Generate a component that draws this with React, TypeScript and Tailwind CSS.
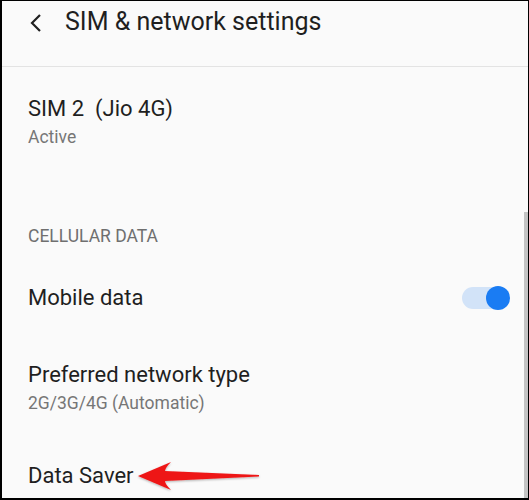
import React from "react";

const Item = (props: { title: string; sub?: string; className?: string }) => {
    return (
        <div className={props.className}>
            <p className="text-[22px] leading-[28px] text-[#1f1f1f]">{props.title}</p>
            {props.sub && <p className="mt-[3px] text-[17.5px] leading-[22px] text-[#767676]">{props.sub}</p>}
        </div>
    );
};

const Toggle = () => (
    <div className="relative w-[48px] h-[24px] flex items-center">
        <div className="w-[44px] h-[22px] rounded-full bg-[#d2e3f8]" />
        <div className="absolute right-0 top-0 size-[24px] rounded-full bg-[#1a7cf3]" />
    </div>
);

// red callout arrow pointing at "Data Saver"
const Arrow = () => (
    <svg width="126" height="36" viewBox="0 0 126 36" className="ml-[2px]">
        <defs>
            <filter id="sh" x="-10%" y="-30%" width="120%" height="160%">
                <feDropShadow dx="0" dy="1" stdDeviation="1.2" floodColor="#000" floodOpacity="0.3" />
            </filter>
        </defs>
        <path d="M2 18 L35 4 Q29 10 29 13 L123 17 L123 18.5 L29 23 Q29 26 35 32 Z" fill="#ee1818" filter="url(#sh)" />
    </svg>
);

export default function App() {
    return (
        <div className="w-[529px] h-[500px] bg-black p-[1px] pl-[2px] pb-[2px] pr-[1px] font-['Roboto',sans-serif]">
            <div className="relative w-full h-full bg-[#fafafa] overflow-hidden">
                <header className="h-[66px] border-b border-[#e3e3e3] flex items-start pt-[6px] pl-[26px]">
                    <svg width="18" height="30" viewBox="0 0 18 30" className="mt-[1px] text-[#202020]">
                        <path d="M12 7 L4 15 L12 23" fill="none" stroke="currentColor" strokeWidth="2.2" />
                    </svg>
                    <h1 className="ml-[19px] text-[25px] leading-[30px] text-[#1f1f1f]">SIM &amp; network settings</h1>
                </header>

                <div className="pl-[26px] pr-[18px]">
                    <Item className="mt-[28px]" title={"SIM 2\u00a0\u00a0(Jio 4G)"} sub="Active" />

                    <p className="mt-[77px] text-[17.5px] leading-[22px] text-[#6f6f6f]">CELLULAR DATA</p>

                    <div className="mt-[37px] flex items-center justify-between">
                        <p className="text-[22px] leading-[28px] text-[#1f1f1f]">Mobile data</p>
                        <Toggle />
                    </div>

                    <Item className="mt-[49px]" title="Preferred network type" sub="2G/3G/4G (Automatic)" />

                    <div className="mt-[44px] flex items-center">
                        <p className="text-[22px] leading-[28px] text-[#1f1f1f]">Data Saver</p>
                        <Arrow />
                    </div>
                </div>

                <div className="absolute right-0 top-[211px] bottom-0 w-[4px] bg-[#c4c4c4]" />
            </div>
        </div>
    );
}
